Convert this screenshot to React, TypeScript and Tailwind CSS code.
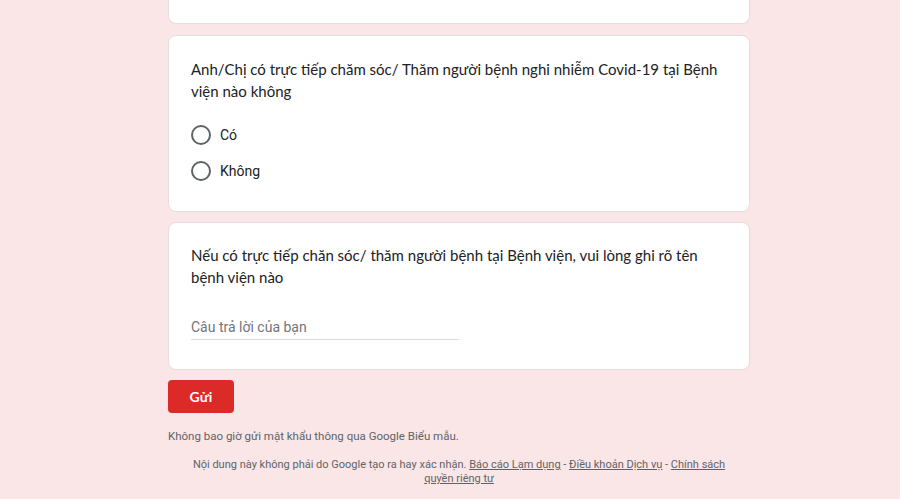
import { ReactNode } from "react";

function Card({ children, className = "" }: { children?: ReactNode; className?: string }) {
  return (
    <div className={`bg-white border border-[#e4dede] rounded-lg px-[22px] ${className}`}>
      {children}
    </div>
  );
}

function Radio({ label }: { label: string }) {
  return (
    <label className="flex items-center h-9">
      <span className="w-5 h-5 rounded-full border-2 border-[#5f6368] mr-[9px]" />
      <span className="text-[14px] text-[#202124]">{label}</span>
    </label>
  );
}

export default function App() {
  return (
    <div className="min-h-[499px] bg-[#fae6e6] font-['Roboto',sans-serif] overflow-hidden">
      <div className="w-[582px] ml-[168px] flex flex-col">
        {/* tail of previous question */}
        <div className="h-[24px] bg-white border border-t-0 border-[#e4dede] rounded-b-lg" />

        <Card className="mt-[11px] pt-[22px] pb-[22px]">
          <h2 className="text-[15px] leading-[22px] text-[#202124] font-['Lato',sans-serif]">
            Anh/Chị có trực tiếp chăm sóc/ Thăm người bệnh nghi nhiễm Covid-19 tại Bệnh viện nào không
          </h2>
          <div className="mt-[15px] flex flex-col">
            <Radio label="Có" />
            <Radio label="Không" />
          </div>
        </Card>

        <Card className="mt-[10px] pt-[21px] pb-[29px]">
          <h2 className="text-[15px] leading-[22px] text-[#202124] font-['Lato',sans-serif]">
            Nếu có trực tiếp chăn sóc/ thăm người bệnh tại Bệnh viện, vui lòng ghi rõ tên bệnh viện nào
          </h2>
          <div className="mt-[27px] w-1/2 border-b border-[#dadce0]">
            <input
              type="text"
              placeholder="Câu trả lời của bạn"
              className="w-full text-[14px] leading-[20px] text-[#202124] placeholder:text-[#70757a] outline-none bg-transparent"
            />
          </div>
        </Card>

        <div className="mt-[10px]">
          <button className="h-[33px] w-[66px] rounded bg-[#dc2a28] text-white text-[14px] font-bold font-['Lato',sans-serif]">
            Gửi
          </button>
        </div>

        <p className="mt-[15px] text-[11.5px] leading-[16px] text-[#5f6368]">
          Không bao giờ gửi mật khẩu thông qua Google Biểu mẫu.
        </p>

        <p className="mt-[14px] px-[24px] text-center text-[11px] leading-[14px] text-[#5f6368]">
          Nội dung này không phải do Google tạo ra hay xác nhận.{" "}
          <a className="underline">Báo cáo Lạm dụng</a> - <a className="underline">Điều khoản Dịch vụ</a> -{" "}
          <a className="underline">Chính sách</a> <a className="underline">quyền riêng tư</a>
        </p>
      </div>
    </div>
  );
}
